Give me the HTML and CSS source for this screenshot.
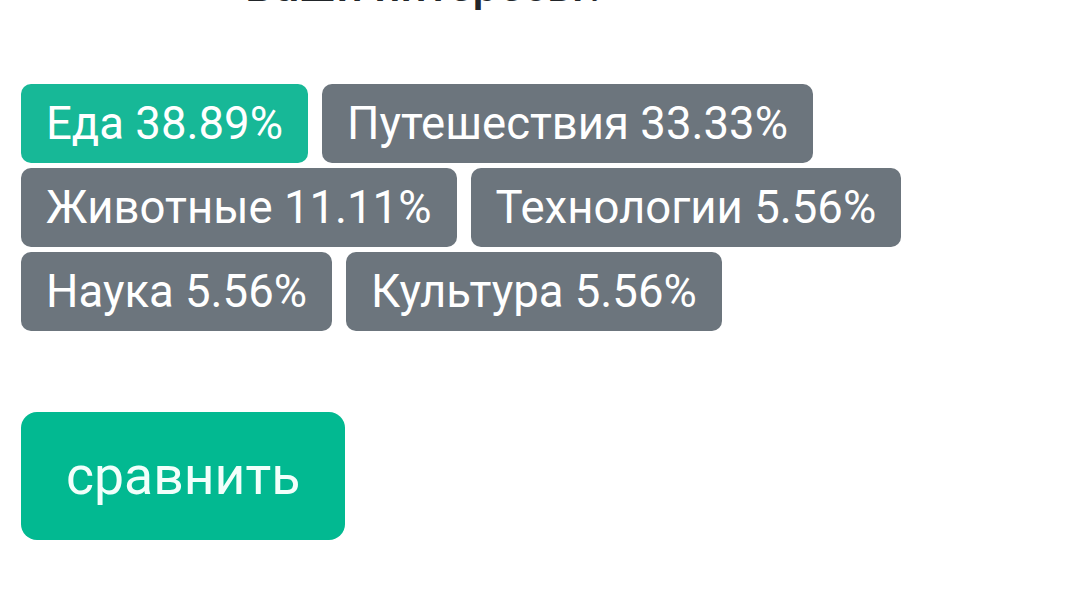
FILE: index.html
```html
<!DOCTYPE html>
<html lang="ru">
<head>
<meta charset="utf-8">
<link rel="stylesheet" href="styles.css">
</head>
<body>
<main class="page">
  <h2 class="title">Ваши интересы?</h2>
  <div class="tags">
    <span class="tag tag-top">Еда 38.89%</span>
    <span class="tag">Путешествия 33.33%</span>
    <span class="tag">Животные 11.11%</span>
    <span class="tag">Технологии 5.56%</span>
    <span class="tag">Наука 5.56%</span>
    <span class="tag">Культура 5.56%</span>
  </div>
  <button class="compare">сравнить</button>
</main>
</body>
</html>
```
FILE: styles.css
```css
html, body {
  margin: 0;
  padding: 0;
  background: #ffffff;
  overflow: hidden;
}
.page {
  font-family: Roboto, "Noto Sans", sans-serif;
  padding: 0 21px;
  height: 605px;
  box-sizing: border-box;
  overflow: hidden;
}
.title {
  margin: -42px 0 0 0;
  padding-left: 224px;
  font-size: 46px;
  line-height: 54px;
  font-weight: 500;
  color: #212529;
}
.tags {
  display: flex;
  flex-wrap: wrap;
  gap: 5px 14px;
  margin-top: 72px;
}
.tag {
  display: inline-block;
  background: #6c757d;
  color: #ffffff;
  font-size: 45.5px;
  line-height: 53px;
  padding: 13px 25px;
  border-radius: 10px;
  white-space: nowrap;
}
.tag-top {
  background: #17b897;
}
.compare {
  display: block;
  margin-top: 81px;
  font-family: Roboto, "Noto Sans", sans-serif;
  font-size: 53.5px;
  line-height: 60px;
  padding: 34px 45px;
  background: #02b991;
  color: #f2fffb;
  border: none;
  border-radius: 16px;
}
```
